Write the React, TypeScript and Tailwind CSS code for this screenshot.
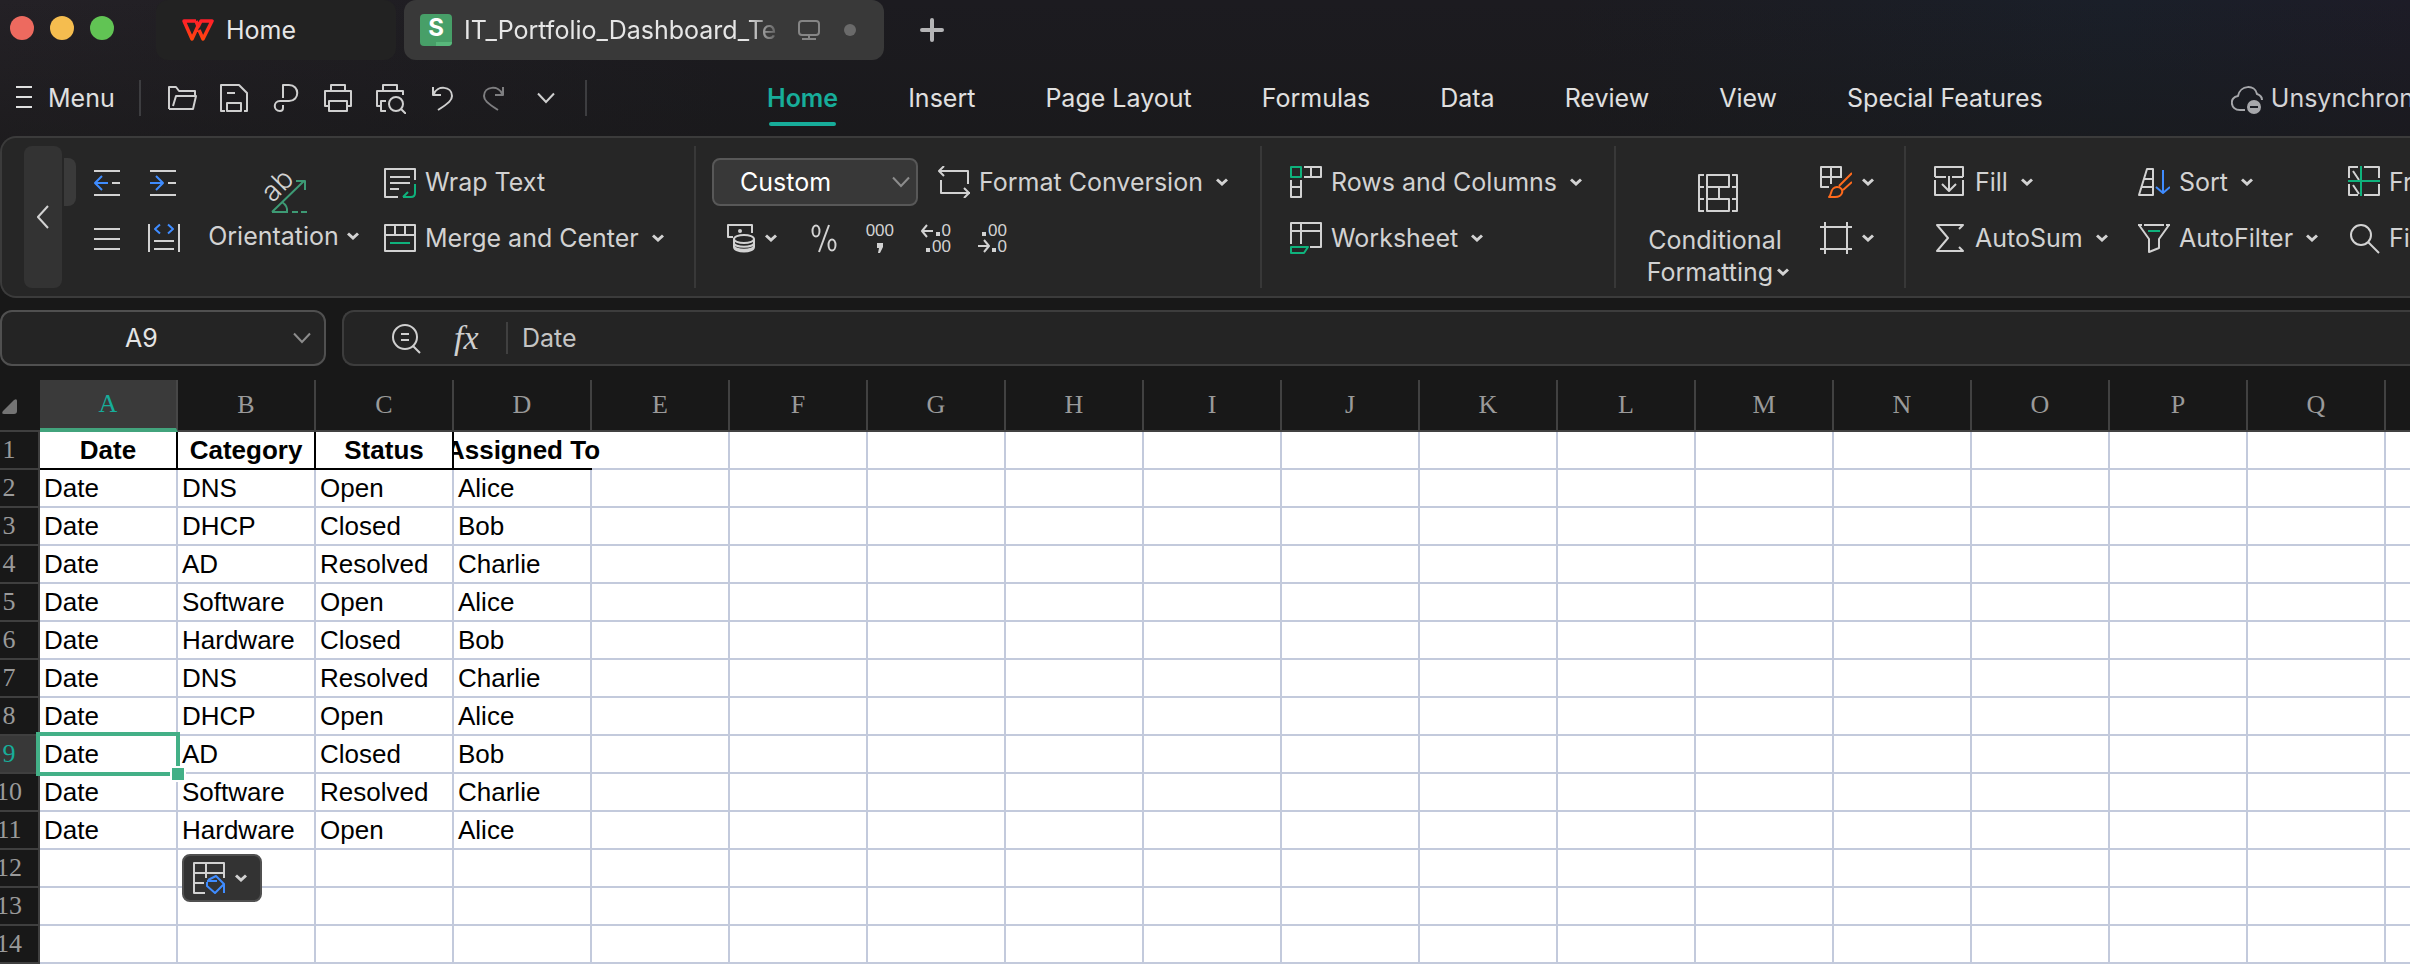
import type { ReactNode } from "react";

const GREEN = "#0fb27c";
const BLUE = "#3f8cff";

function Icon({ children, size = 32, className = "" }: { children: ReactNode; size?: number; className?: string }) {
  return (
    <svg
      width={size}
      height={size}
      viewBox={`0 0 ${size} ${size}`}
      fill="none"
      stroke="currentColor"
      strokeWidth={2}
      strokeLinejoin="round"
      aria-hidden="true"
      className={`shrink-0 ${className}`}
    >
      {children}
    </svg>
  );
}

function Caret() {
  return (
    <svg width="12" height="8" viewBox="0 0 12 8" fill="none" stroke="currentColor" strokeWidth="3" className="shrink-0" aria-hidden="true">
      <path d="M1 1.5 6 6l5-4.5" />
    </svg>
  );
}

function Chevron({ className = "" }: { className?: string }) {
  return (
    <svg width="18" height="12" viewBox="0 0 18 12" fill="none" stroke="currentColor" strokeWidth="2" className={`shrink-0 ${className}`} aria-hidden="true">
      <path d="M1 1.5l8 8.5 8-8.5" />
    </svg>
  );
}

function Digits({ x, y, children }: { x: number; y: number; children: string }) {
  return (
    <text x={x} y={y} fill="currentColor" stroke="none" fontSize="17" fontFamily="Liberation Sans, sans-serif" textAnchor="end">
      {children}
    </text>
  );
}

const icons = {
  open: <path d="M3 27V5h7l3 4h16v4M3 27h24l3-13H10L7 24" />,
  save: <path d="M7 29H3V3h18l8 8v18h-3M9 29v-8h14v8zM9 11h8" />,
  pdf: <path d="M13 16V3h6c11 0 11 16 0 16h-9c-7 0-7 10 0 10 2 0 3-1 3-3v-3" />,
  print: <path d="M9 8V3h14v5M6 24H3V9h26v15h-3M7 19h18v10H7z" />,
  preview: (
    <>
      <path d="M9 8V3h14v5M6 24H3V9h26v4M12 29H7V19h5M27 27l5 5" />
      <circle cx="22" cy="22" r="7" />
    </>
  ),
  undo: <path d="M7 5v8h8M8 12c3-9 18-8 18 2 0 4-3 7-14 14" />,
  redo: <path d="M25 5v8h-8M24 12c-3-9-18-8-18 2 0 4 3 7 14 14" />,
  indentLess: (
    <>
      <path d="M3 5h26M21 17h8M3 29h26" />
      <path stroke={BLUE} d="M17 17H4M11 10l-7 7 7 7" />
    </>
  ),
  indentMore: (
    <>
      <path d="M2 5h26M20 17h8M2 29h26" />
      <path stroke={BLUE} d="M2 17h13M8 10l7 7-7 7" />
    </>
  ),
  lines: <path d="M3 7h26M3 17h26M3 27h26" />,
  distribute: (
    <>
      <path d="M1 2v28M31 2v28M6 19h20M6 27h20" />
      <path stroke={BLUE} d="M12 2.500L7 7l5 4.500M20 2.500L25 7l-5 4.500" />
    </>
  ),
  wrap: (
    <>
      <path d="M31 14V3H1v28h13M6 11h20M6 17h20M6 23h9" />
      <path stroke={GREEN} d="M31 18v9q0 4-4 4h-8M24 26l-5 5" />
    </>
  ),
  merge: (
    <>
      <path d="M1 3h30v26H1zM1 13h30M11 3v10M21 3v10" />
      <path stroke={GREEN} d="M6 21h20" />
    </>
  ),
  convert: <path d="M6 0L1 5l5 5M1 5h29v13M3 14v13h29M26 22l5 5-5 5" />,
  currency: (
    <>
      <path d="M8 15H3V3h24v8" />
      <circle cx="15" cy="9" r="2" fill="currentColor" stroke="none" />
      <ellipse cx="19" cy="17" rx="10" ry="4" />
      <path d="M9 17v8c0 6 20 6 20 0v-8M9 21c0 5 20 5 20 0M9 24c0 5 20 5 20 0" />
    </>
  ),
  percent: (
    <>
      <ellipse cx="8" cy="9" rx="3.500" ry="5.500" />
      <ellipse cx="24" cy="23" rx="3.500" ry="5.500" />
      <path d="M21 3L11 30" />
    </>
  ),
  thousands: (
    <>
      <Digits x={30} y={14}>000</Digits>
      <path fill="currentColor" stroke="none" d="M13 21h6v4l-3 6h-2l1-5h-2z" />
    </>
  ),
  addDecimal: (
    <>
      <path d="M7 3L2 9l5 6M2 9h11" />
      <path fill="currentColor" stroke="none" d="M16 10h4v4h-4zM6 26h4v4H6z" />
      <Digits x={31} y={14}>0</Digits>
      <Digits x={31} y={30}>00</Digits>
    </>
  ),
  removeDecimal: (
    <>
      <path d="M8 18l5 6-5 6M2 24h11" />
      <path fill="currentColor" stroke="none" d="M6 10h4v4H6zM16 26h4v4h-4z" />
      <Digits x={31} y={14}>00</Digits>
      <Digits x={31} y={30}>0</Digits>
    </>
  ),
  rowsCols: (
    <>
      <path d="M14 1h17v10H14M21 1v10M1 14v17h10V14M1 21h10" />
      <path stroke={GREEN} d="M1 1h10v10H1z" />
    </>
  ),
  worksheet: (
    <>
      <path d="M1 22V1h30v24H20M11 1v21M1 9h30" />
      <path stroke={GREEN} d="M1 25h17l-4 6H1z" />
    </>
  ),
  cellStyle: (
    <>
      <path d="M21 12V1H1v20h8M11 1v17M1 11h20" />
      <path stroke="#ff6a1c" d="M9 31c3-2 1-10 8-10 4 0 6 3 5 6-1 3-4 4-7 4zM19 20L32 7M23 24l9-8" />
    </>
  ),
  frame: <path d="M5 0v32M27 0v32M0 5h32M0 27h32" />,
  fill: <path d="M1 11V1h28v10M1 11h11M18 11h11M1 14v15h28V14M15 10v15M8 18l7 7 7-7" />,
  sum: <path d="M25 7l4-4H3l11 13L3 29h26l-4-4" />,
  sort: (
    <>
      <path d="M9 3h6v26H1zM6 13h9M4 21h11" />
      <path stroke={BLUE} d="M25 4v23M18 21l7 6 7-6" />
    </>
  ),
  filter: (
    <>
      <path d="M0 3h4M6 3h20M28 3h4M1 3l10 14v13l10-4v-9L31 3" />
      <path stroke={GREEN} d="M10 9h12" />
    </>
  ),
  freeze: (
    <>
      <path d="M1 12V1h9M16 1h15v11M31 18v11H16M10 29H1V18M5 5l6 9M5 19l6 9" />
      <path stroke={GREEN} d="M13 0v30M0 15h32" />
    </>
  ),
  find: (
    <>
      <circle cx="13" cy="13" r="10" />
      <path d="M20 20l11 11" />
    </>
  ),
};

function IconButton({ icon, label, className = "" }: { icon: ReactNode; label: string; className?: string }) {
  return (
    <button type="button" aria-label={label} className={`flex shrink-0 items-center ${className}`}>
      <Icon>{icon}</Icon>
    </button>
  );
}

function ToolButton({ icon, label, caret = true }: { icon: ReactNode; label: string; caret?: boolean }) {
  return (
    <button type="button" className="flex h-14 shrink-0 items-center gap-[9px] whitespace-nowrap">
      <Icon>{icon}</Icon>
      {label}
      {caret && (
        <span className="ml-1">
          <Caret />
        </span>
      )}
    </button>
  );
}

function TitleBar() {
  return (
    <header className="flex h-15 items-center">
      <div className="flex w-[156px] shrink-0 items-center gap-4 pb-1 pl-[10px]">
        <button type="button" aria-label="Close" className="size-6 rounded-full bg-[#ed6a5f]" />
        <button type="button" aria-label="Minimize" className="size-6 rounded-full bg-[#f5bd4f]" />
        <button type="button" aria-label="Zoom" className="size-6 rounded-full bg-[#61c454]" />
      </div>
      <button type="button" className="flex h-15 w-60 shrink-0 items-center gap-3 rounded-xl bg-[#222222] pl-[26px] text-[#e6e6e6]">
        <svg width="32" height="24" viewBox="0 0 32 24" fill="none" strokeWidth="3.5" strokeLinejoin="round" aria-hidden="true">
          <defs>
            <linearGradient id="brand" x1="0" y1="0" x2="0" y2="24" gradientUnits="userSpaceOnUse">
              <stop offset="0" stopColor="#ff1a2b" />
              <stop offset="1" stopColor="#ff4a0c" />
            </linearGradient>
          </defs>
          <path stroke="url(#brand)" d="M14 3H2l8 18 6-13-2-5M17 12l4 9 9-18H19l-3 6" />
        </svg>
        Home
      </button>
      <div className="ml-2 flex h-15 w-[480px] shrink-0 items-center rounded-xl bg-[#393939] pl-4 text-[#e6e6e6]">
        <span className="flex h-8 w-8 shrink-0 flex-col overflow-hidden rounded bg-[#479f68] text-center text-2xl leading-7 font-bold text-white">
          S
          <span className="ml-4 h-1 w-4 bg-[#58b87b]" />
        </span>
        <span className="ml-3 w-[328px] overflow-hidden whitespace-nowrap [mask-image:linear-gradient(to_right,black_86%,transparent_98%)]">
          IT_Portfolio_Dashboard_Te
        </span>
        <svg width="24" height="24" viewBox="0 0 24 24" fill="none" stroke="#858585" strokeWidth="2" className="ml-1 shrink-0" aria-hidden="true">
          <rect x="3" y="3" width="20" height="14" rx="3" />
          <path d="M13 17v4M6 21h14" />
        </svg>
        <span className="ml-6 size-3 rounded-full bg-[#6a6a6a]" />
      </div>
      <button type="button" aria-label="New tab" className="ml-9 text-[#b4b4b6]">
        <svg width="24" height="24" viewBox="0 0 24 24" stroke="currentColor" strokeWidth="4" strokeLinecap="round" aria-hidden="true">
          <path d="M12 2v20M2 12h20" />
        </svg>
      </button>
    </header>
  );
}

const menuTabs = ["Insert", "Page Layout", "Formulas", "Data", "Review", "View", "Special Features"];

function MenuBar() {
  return (
    <div className="flex h-19 items-center text-[#e0e0e0]">
      <button type="button" className="ml-4 flex w-[123px] shrink-0 items-center gap-4">
        <svg width="16" height="24" viewBox="0 0 16 24" stroke="currentColor" strokeWidth="2" aria-hidden="true">
          <path d="M0 1h16M0 11h16M0 21h16" />
        </svg>
        Menu
      </button>
      <span className="h-9 w-0.5 shrink-0 bg-[#3d3d40]" />
      <div className="ml-[25px] flex shrink-0 items-center gap-5 text-[#cfcfcf]">
        <IconButton icon={icons.open} label="Open" />
        <IconButton icon={icons.save} label="Save" />
        <IconButton icon={icons.pdf} label="Export to PDF" />
        <IconButton icon={icons.print} label="Print" />
        <IconButton icon={icons.preview} label="Print preview" />
        <IconButton icon={icons.undo} label="Undo" />
        <IconButton icon={icons.redo} label="Redo" className="text-[#7e7e80]" />
        <button type="button" aria-label="More quick actions" className="flex w-8 justify-center">
          <Chevron />
        </button>
      </div>
      <span className="ml-[23px] h-9 w-0.5 shrink-0 bg-[#3d3d40]" />
      <nav className="ml-[180px] flex shrink-0 items-center gap-[70px] whitespace-nowrap">
        <a href="#home" className="relative font-semibold text-[#17ad9a]">
          Home
          <span className="absolute inset-x-0.5 -bottom-3 h-1 rounded-full bg-[#17ad9a]" />
        </a>
        {menuTabs.map((tab) => (
          <a key={tab} href="#tab">
            {tab}
          </a>
        ))}
      </nav>
      <button type="button" className="ml-[188px] flex shrink-0 items-center gap-2 whitespace-nowrap text-[#d4d4d6]">
        <Icon className="text-[#a6a7ab]">
          <path d="M14 28H9c-10 0-11-13-2-14C9 3 24 2 26 12c3 1 5 3 5 6" />
          <circle cx="23" cy="25" r="7" fill="currentColor" stroke="none" />
          <path d="M19 25h8" stroke="#1b1e25" />
        </Icon>
        Unsynchronized
      </button>
    </div>
  );
}

function Ribbon() {
  return (
    <section aria-label="Home tools" className="flex h-[162px] overflow-hidden rounded-l-2xl border-2 border-r-0 border-[#3b3b3b] bg-[#262626] py-2 text-[#d2d2d2]">
      <div className="flex w-[692px] shrink-0 pl-[22px]">
        <button type="button" aria-label="Scroll left" className="flex w-[38px] items-center justify-center rounded-lg bg-[#333333]">
          <svg width="12" height="24" viewBox="0 0 12 24" fill="none" stroke="currentColor" strokeWidth="2" aria-hidden="true">
            <path d="M11 1L1 12l10 11" />
          </svg>
        </button>
        <span className="mt-3 ml-0.5 h-12 w-3 rounded-r-lg bg-[#3a3a3a]" />
        <div className="mt-2 ml-[15px] grid grid-cols-2 grid-rows-[56px_56px] gap-x-[25px]">
          <IconButton icon={icons.indentLess} label="Decrease indent" />
          <IconButton icon={icons.indentMore} label="Increase indent" />
          <IconButton icon={icons.lines} label="Justify" />
          <IconButton icon={icons.distribute} label="Distribute" />
        </div>
        <button type="button" className="ml-[26px] flex w-[155px] flex-col items-center gap-1.5 pt-5">
          <Icon size={48}>
            <text x="0" y="0" transform="translate(24 26) rotate(-45)" textAnchor="middle" fill="currentColor" stroke="none" fontSize="28" fontWeight="300" fontFamily="Inter, sans-serif">
              ab
            </text>
            <path stroke="#3d9a74" d="M12 46l32-31M36 15h9v9M22 36q6 4 5 10M12 46h16M32 46h6M41 46h6" />
          </Icon>
          <span className="flex items-center gap-2 leading-8">
            Orientation
            <Caret />
          </span>
        </button>
        <div className="mt-2 ml-[23px]">
          <ToolButton icon={icons.wrap} label="Wrap Text" caret={false} />
          <ToolButton icon={icons.merge} label="Merge and Center" />
        </div>
      </div>

      <div className="w-[566px] shrink-0 border-l-2 border-[#383838] pt-2 pl-4">
        <div className="flex h-14 items-center gap-5">
          <label className="relative flex items-center">
            <select aria-label="Number format" className="h-12 w-[206px] appearance-none rounded-lg border-2 border-[#585858] bg-[#383838] pl-[26px] text-white">
              <option>Custom</option>
            </select>
            <span className="pointer-events-none absolute right-2 text-[#8c8c8c]">
              <Chevron />
            </span>
          </label>
          <ToolButton icon={icons.convert} label="Format Conversion" />
        </div>
        <div className="flex h-14 items-center pl-[13px]">
          <button type="button" aria-label="Currency format" className="mr-[31px] flex items-center gap-2">
            <Icon>{icons.currency}</Icon>
            <Caret />
          </button>
          <div className="flex gap-6">
            <IconButton icon={icons.percent} label="Percent" />
            <IconButton icon={icons.thousands} label="Thousands separator" />
            <IconButton icon={icons.addDecimal} label="Increase decimal" />
            <IconButton icon={icons.removeDecimal} label="Decrease decimal" />
          </div>
        </div>
      </div>

      <div className="w-[354px] shrink-0 border-l-2 border-[#383838] pt-2 pl-7">
        <ToolButton icon={icons.rowsCols} label="Rows and Columns" />
        <ToolButton icon={icons.worksheet} label="Worksheet" />
      </div>

      <div className="flex w-[290px] shrink-0 border-l-2 border-[#383838] pl-7">
        <button type="button" className="flex w-[148px] flex-col items-center gap-2.5 pt-7 leading-8">
          <Icon size={40}>
            <path d="M6 1H1v36h5M1 13h5M1 25h5M34 1h5v36h-5M39 13h-5M39 25h-5M9 1h22v12H9zM9 25h22v12H9zM9 13v12M21 13v12" />
          </Icon>
          <span className="flex flex-col">
            <span className="mr-1.5">Conditional</span>
            <span className="flex items-center gap-1">
              Formatting
              <Caret />
            </span>
          </span>
        </button>
        <div className="mt-2 ml-7">
          <button type="button" aria-label="Cell style" className="flex h-14 items-center gap-[10px]">
            <Icon>{icons.cellStyle}</Icon>
            <Caret />
          </button>
          <button type="button" aria-label="Cell size" className="flex h-14 items-center gap-[10px]">
            <Icon>{icons.frame}</Icon>
            <Caret />
          </button>
        </div>
      </div>

      <div className="grid shrink-0 grid-cols-[204px_210px_auto] grid-rows-[56px_56px] border-l-2 border-[#383838] pt-2 pl-7">
        <ToolButton icon={icons.fill} label="Fill" />
        <ToolButton icon={icons.sort} label="Sort" />
        <ToolButton icon={icons.freeze} label="Freeze Panes" />
        <ToolButton icon={icons.sum} label="AutoSum" />
        <ToolButton icon={icons.filter} label="AutoFilter" />
        <ToolButton icon={icons.find} label="Find and Replace" />
      </div>
    </section>
  );
}

function FormulaBar() {
  return (
    <div className="mt-3 flex h-14 gap-4">
      <label className="flex w-[326px] shrink-0 items-center rounded-xl border-2 border-[#505050] bg-[#242424] pr-[13px]">
        <input aria-label="Name box" defaultValue="A9" className="min-w-0 flex-1 bg-transparent pr-3 text-center text-[#e4e4e4] outline-none" />
        <span className="text-[#8c8c8c]">
          <Chevron />
        </span>
      </label>
      <div className="flex flex-1 items-center rounded-l-xl border-2 border-r-0 border-[#3d3d3d] bg-[#242424] pl-[47px] text-[#cfcfcf]">
        <IconButton
          label="Search formula"
          icon={
            <>
              <circle cx="14" cy="15" r="12" />
              <path d="M22 24l7 7M10 12h8M10 18h8" />
            </>
          }
        />
        <button type="button" aria-label="Insert function" className="ml-[31px] w-8 text-left font-['Liberation_Serif',serif] text-[34px] leading-8 italic">
          fx
        </button>
        <span className="ml-5 h-8 w-0.5 bg-[#404040]" />
        <input aria-label="Formula" defaultValue="Date" className="ml-[14px] min-w-0 flex-1 bg-transparent text-[#c4c4c4] outline-none" />
      </div>
    </div>
  );
}

const columns = "ABCDEFGHIJKLMNOPQR".split("");

const sheet: string[][] = [
  ["Date", "Category", "Status", "Assigned To"],
  ["Date", "DNS", "Open", "Alice"],
  ["Date", "DHCP", "Closed", "Bob"],
  ["Date", "AD", "Resolved", "Charlie"],
  ["Date", "Software", "Open", "Alice"],
  ["Date", "Hardware", "Closed", "Bob"],
  ["Date", "DNS", "Resolved", "Charlie"],
  ["Date", "DHCP", "Open", "Alice"],
  ["Date", "AD", "Closed", "Bob"],
  ["Date", "Software", "Resolved", "Charlie"],
  ["Date", "Hardware", "Open", "Alice"],
  [],
  [],
  [],
];

function PasteOptions() {
  return (
    <button type="button" aria-label="Paste options" className="absolute top-1 left-1 z-10 flex h-12 w-20 items-center gap-[10px] rounded-lg border-2 border-[#505050] bg-[#333333] pl-[9px] text-[#d2d2d2]">
      <Icon>
        <path d="M12 31H1V1h30v15M1 11h30M13 1v15M1 21h10" />
        <path stroke={BLUE} d="M14 19h10M15 18l8-4 8 8v9M14 20v4l8 7 9-9" />
      </Icon>
      <Caret />
    </button>
  );
}

function cellClass(row: number, col: number) {
  if (row === 0 && col < 3) {
    return "border-r-2 border-b-2 border-black bg-white p-0 font-bold";
  }
  if (row === 0 && col === 3) {
    return "relative border-b-2 border-black bg-white p-0 font-bold";
  }
  if ((row === 8 && col === 0) || (row === 11 && col === 1)) {
    return "relative border-r-2 border-b-2 border-[#c3cadc] bg-white p-0";
  }
  return "border-r-2 border-b-2 border-[#c3cadc] bg-white p-0";
}

function Sheet() {
  return (
    <div className="mt-[14px] overflow-hidden">
      <table className="w-[2524px] table-fixed border-separate border-spacing-0 font-['Liberation_Sans',Arial,sans-serif] text-[26px] leading-9 text-black">
        <colgroup>
          <col className="w-10" />
          {columns.map((c) => (
            <col key={c} className="w-[138px]" />
          ))}
        </colgroup>
        <thead className="font-['Liberation_Serif',serif] text-[#9a9a9a]">
          <tr className="h-[52px]">
            <th className="border-b-2 border-[#3f3f3f] p-0">
              <button type="button" aria-label="Select all" className="flex h-[50px] w-full items-end pb-4 pl-0.5">
                <svg width="15" height="15" viewBox="0 0 15 15" fill="#747474" aria-hidden="true">
                  <path d="M12 1q3-2 3 1v10q0 3-3 3H2q-3 0-1-3z" />
                </svg>
              </button>
            </th>
            {columns.map((c) => (
              <th
                key={c}
                scope="col"
                className={
                  c === "A"
                    ? "border-r-2 border-b-4 border-r-[#474747] border-b-[#42a37c] bg-[#3a3a3a] p-0 font-normal text-[#17ad9a]"
                    : "border-r-2 border-b-2 border-[#414141] p-0 font-normal"
                }
              >
                {c}
              </th>
            ))}
          </tr>
        </thead>
        <tbody>
          {sheet.map((cells, row) => (
            <tr key={row} className="h-[38px]">
              <th
                scope="row"
                className={
                  row === 8
                    ? "border-r-2 border-b-2 border-[#3f3f3f] bg-[#383838] p-0 font-['Liberation_Serif',serif] font-normal text-[#17ad9a]"
                    : "border-r-2 border-b-2 border-[#3f3f3f] p-0 font-['Liberation_Serif',serif] font-normal text-[#9a9a9a]"
                }
              >
                <span className="-ml-5 flex justify-center">{row + 1}</span>
              </th>
              {columns.map((c, col) => (
                <td key={c} className={cellClass(row, col)}>
                  {cells[col] && row === 0 && (
                    <span className="flex justify-center whitespace-nowrap [clip-path:inset(0_-20px_0_0)]">{cells[col]}</span>
                  )}
                  {cells[col] && row > 0 && <span className="block pl-1 whitespace-nowrap">{cells[col]}</span>}
                  {row === 8 && col === 0 && (
                    <span className="pointer-events-none absolute -inset-1 z-10 border-4 border-[#43b087]">
                      <span className="absolute -right-2.5 -bottom-2.5 size-4 border-2 border-white bg-[#43b087]" />
                    </span>
                  )}
                  {row === 11 && col === 1 && <PasteOptions />}
                </td>
              ))}
            </tr>
          ))}
        </tbody>
      </table>
    </div>
  );
}

export default function App() {
  return (
    <main className="min-h-screen w-full overflow-hidden bg-[#181818] bg-[linear-gradient(to_bottom,transparent_0px,#181818_260px),linear-gradient(to_right,#242126,#1c1b20_30%,#1c1b20_65%,#1a1f29_88%,#1d1c27)] font-['Inter',sans-serif] text-[25px] leading-8">
      <TitleBar />
      <MenuBar />
      <Ribbon />
      <FormulaBar />
      <Sheet />
    </main>
  );
}
